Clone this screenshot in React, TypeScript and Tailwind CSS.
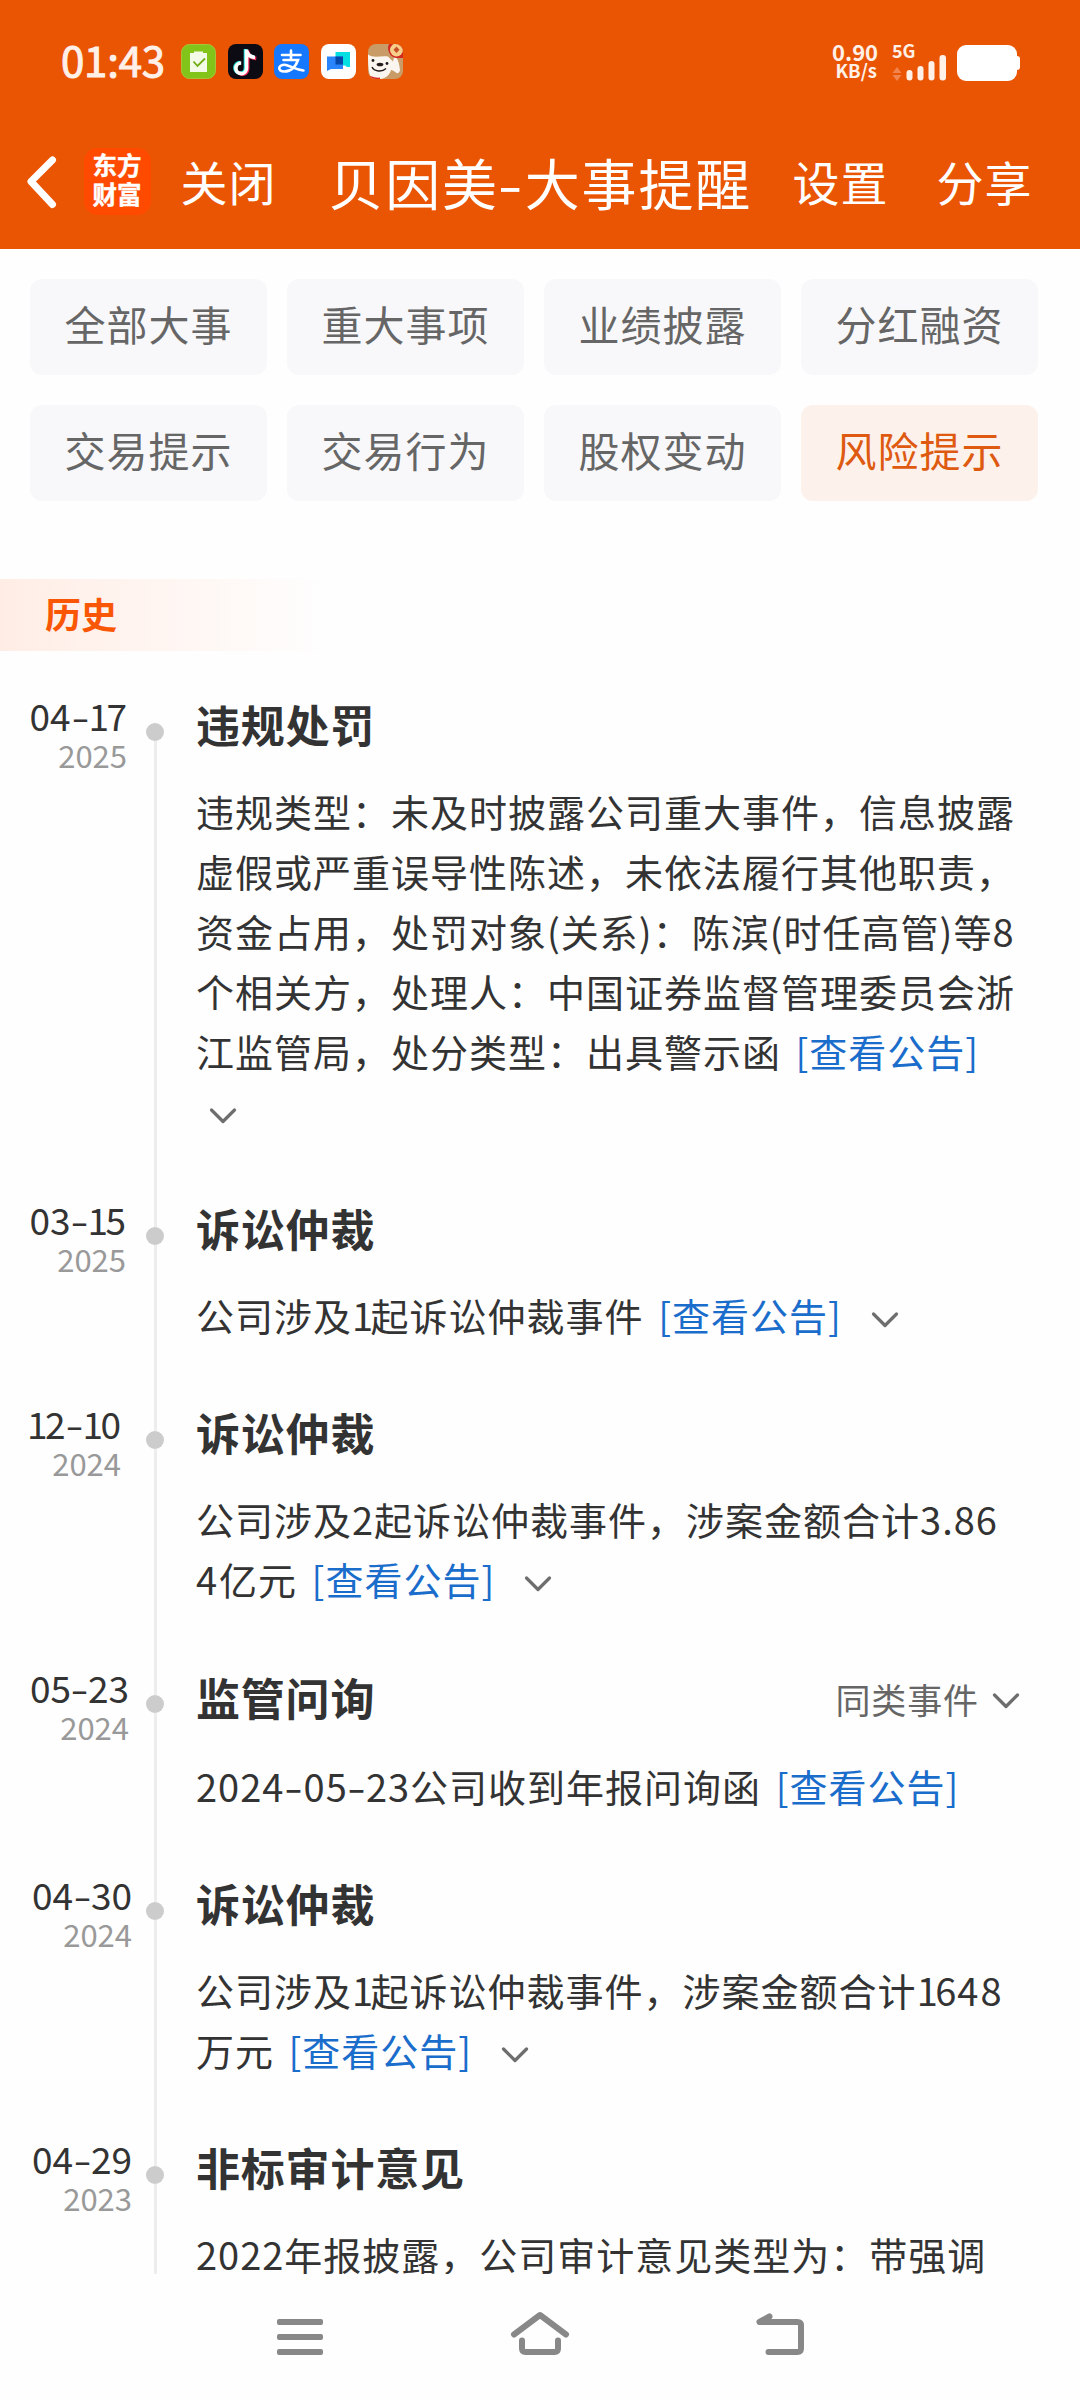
import React from "react";

type Line = { text: string; link?: boolean; chevron?: boolean };
type Item = {
  date: string;
  year: string;
  width: number;
  title: string;
  similar?: boolean;
  lines: Line[];
};

const items: Item[] = [
  {
    date: "04-17",
    year: "2025",
    width: 97,
    title: "违规处罚",
    lines: [
      { text: "违规类型：未及时披露公司重大事件，信息披露" },
      { text: "虚假或严重误导性陈述，未依法履行其他职责，" },
      { text: "资金占用，处罚对象(关系)：陈滨(时任高管)等8" },
      { text: "个相关方，处理人：中国证券监督管理委员会浙" },
      { text: "江监管局，处分类型：出具警示函", link: true },
      { text: "", chevron: true },
    ],
  },
  {
    date: "03-15",
    year: "2025",
    width: 96,
    title: "诉讼仲裁",
    lines: [{ text: "公司涉及1起诉讼仲裁事件", link: true, chevron: true }],
  },
  {
    date: "12-10",
    year: "2024",
    width: 91,
    title: "诉讼仲裁",
    lines: [
      { text: "公司涉及2起诉讼仲裁事件，涉案金额合计3.86" },
      { text: "4亿元", link: true, chevron: true },
    ],
  },
  {
    date: "05-23",
    year: "2024",
    width: 99,
    title: "监管问询",
    similar: true,
    lines: [{ text: "2024-05-23公司收到年报问询函", link: true }],
  },
  {
    date: "04-30",
    year: "2024",
    width: 102,
    title: "诉讼仲裁",
    lines: [
      { text: "公司涉及1起诉讼仲裁事件，涉案金额合计1648" },
      { text: "万元", link: true, chevron: true },
    ],
  },
  {
    date: "04-29",
    year: "2023",
    width: 102,
    title: "非标审计意见",
    lines: [{ text: "2022年报披露，公司审计意见类型为：带强调" }],
  },
];

const tabs = ["全部大事", "重大事项", "业绩披露", "分红融资", "交易提示", "交易行为", "股权变动", "风险提示"];

/* Proportional figures: a narrow 1, a slightly wide 4 and a broad hyphen. */
function Figures({ children }: { children: string }) {
  return (
    <span>
      {children.split(/([14-])/).map((part, i) => {
        if (part === "1") return <span key={i} className="tracking-[-2.5px]">1</span>;
        if (part === "4") return <span key={i} className="mr-[1px]">4</span>;
        if (part === "-") return <span key={i} className="ml-[2px] mr-[2px] inline-block scale-x-140">-</span>;
        return part;
      })}
    </span>
  );
}

function Chevron({ className }: { className: string }) {
  return (
    <svg className={className} width="28" height="18" viewBox="0 0 28 18" fill="none" stroke="#6e6e6e" strokeWidth="3.2" strokeLinecap="round" strokeLinejoin="round">
      <path d="M2.500 3 14 14.500 25.500 3" />
    </svg>
  );
}

function StatusBar() {
  return (
    <div className="flex h-[124px] items-start pl-[61px] pr-[60px] pt-11 text-[#fff0e8]">
      <div className="-mt-[3px] w-[120px] text-[42px] leading-[36px] tracking-[-0.2px] [-webkit-text-stroke:1px_#fff0e8]">01:43</div>
      <div className="flex gap-[11.7px]">
        <svg width="35" height="35" viewBox="0 0 35 35">
          <rect x="0.500" y="0.500" width="34" height="34" rx="8" fill="#83c41b" stroke="#a5c63a" />
          <path d="M9 9h4V7.500h9V9h4v19H9z" fill="#f3fae6" />
          <path d="m12.500 17.500 4 4.500 7.500-7.500" fill="none" stroke="#6fae12" strokeWidth="1.800" />
        </svg>
        <svg width="35" height="35" viewBox="0 0 35 35">
          <rect width="35" height="35" rx="8" fill="#0c0b14" />
          <g fill="none" strokeWidth="3.600">
            <path d="M17.500 5v19a5.300 5.300 0 1 1-5.300-5.500M17.500 6c1 4.500 4 6.500 8.500 7" stroke="#20e4e0" />
            <path d="M19.600 6.500V25.500a5.300 5.300 0 0 1-9.500 2.500M19.600 7.500c1 4.500 4 6.500 8.700 7" stroke="#f5295a" />
            <path d="M18.500 5.500v19a5.300 5.300 0 1 1-5.300-5.500M18.500 6.500c1 4.500 4 6.500 8.500 7" stroke="#fff" />
          </g>
        </svg>
        <svg width="35" height="35" viewBox="0 0 35 35">
          <rect width="35" height="35" rx="8" fill="#1677ff" />
          <path d="M8 11h18.500M17 6.500V16M9.500 16h14.500C22 22.500 17 27.500 10.500 27.500c-4 0-6-2-5-4.500 1-2 4.500-3 8-1.500 5 1.500 9.500 4.500 16 5" fill="none" stroke="#fff" strokeWidth="2.600" strokeLinecap="round" />
        </svg>
        <svg width="35" height="35" viewBox="0 0 35 35">
          <rect width="35" height="35" rx="8" fill="#fff" />
          <path d="M14.500 8H29v15h-3l-2-1.500h-9.500z" fill="#06dfe2" />
          <path d="M6 12.500h16V25H10l-4 2z" fill="#2a84fb" />
          <path d="M14.500 12.500H22V20.500h-7.500z" fill="#0647a8" />
        </svg>
        <svg width="35" height="35" viewBox="0 0 35 35">
          <defs>
            <clipPath id="mascot">
              <rect width="35" height="35" rx="8" />
            </clipPath>
          </defs>
          <g clipPath="url(#mascot)">
            <rect width="35" height="35" fill="#c99b66" />
            <path d="M0 10.500c5 4 13 1 20 2l5 5 1-4c3-1 5 4 6 12.500-1 4-3 4-6 1l-3-1c-2 8-10 10.500-18 8.500-4-1-5-10-5-24z" fill="#faf6ef" />
            <path d="M20 3c0 6 3 10 8 11l7 0V0H21z" fill="#d22a22" />
            <circle cx="28.500" cy="6" r="6.500" fill="#f7cf8b" />
            <path d="m28.500 2.500 3 3.200-3 3.200-3-3.200z" fill="#c7502a" />
            <ellipse cx="12" cy="20.500" rx="3.400" ry="1.800" fill="#221a18" />
            <circle cx="5" cy="16.500" r="1.400" fill="#221a18" />
            <circle cx="19" cy="19.500" r="1.400" fill="#221a18" />
            <path d="M4 23c2 4.500 10 5.500 14 1.500" fill="none" stroke="#221a18" strokeWidth="1.400" />
            <path d="M2 33c4 1.500 7 2 10 1.500" fill="none" stroke="#d22a22" strokeWidth="2" />
          </g>
        </svg>
      </div>
      <div className="ml-auto flex">
        <div className="-mt-[1px] w-[45px] text-right font-bold">
          <div className="text-[22px] leading-[17px]">0.90</div>
          <div className="mt-[2px] text-[18.5px] leading-[17px]">KB/s</div>
        </div>
        <div className="ml-[15px] w-[57px]">
          <div className="-mt-[1px] text-[18px] font-bold leading-[15px]">5G</div>
          <svg className="-mt-[3px] block" width="56" height="26" viewBox="0 0 56 26">
            <path d="M5 12l4.500 6h-9zM5 26l4.500-6h-9z" fill="#f28450" />
            <g fill="#fff0e8">
              <rect x="14.500" y="15" width="6" height="10.500" rx="3" />
              <rect x="25.500" y="11" width="6" height="14.500" rx="3" />
              <rect x="36.500" y="6" width="6" height="19.500" rx="3" />
              <rect x="47.500" y="0" width="6.500" height="25.500" rx="3" />
            </g>
          </svg>
        </div>
        <div className="ml-2 flex items-center">
          <div className="h-9 w-[60px] rounded-[9px] bg-white" />
          <div className="h-[14px] w-[3px] rounded-r-[3px] bg-white" />
        </div>
      </div>
    </div>
  );
}

function NavBar() {
  return (
    <div className="flex h-[118px] items-center pb-[4px] text-white">
      <svg className="ml-6 shrink-0" width="36" height="56" viewBox="0 0 36 56" fill="none" stroke="#fff" strokeWidth="7" strokeLinecap="round" strokeLinejoin="round">
        <path d="M28.500 7 7 28.500 28.500 51.500" />
      </svg>
      <div className="ml-[23.5px] flex h-[67px] w-[67px] shrink-0 flex-col items-center justify-center rounded-[14px] bg-[#ff4a00] pb-[5px] text-[24.5px] font-bold leading-[29px] [-webkit-text-stroke:0.4px_#fff]">
        <span>东方</span>
        <span>财富</span>
      </div>
      <div className="ml-[30px] w-[94px] shrink-0 whitespace-nowrap text-[47px] leading-[60px] tracking-[1px]">关闭</div>
      <div className="ml-[54px] w-[421px] shrink-0 whitespace-nowrap text-[55px] leading-[70px] tracking-[1.8px]">
        贝因美<span className="ml-[2.5px] mr-[2.5px] inline-block scale-x-130">-</span>大事提醒
      </div>
      <div className="ml-[43px] w-[98px] shrink-0 whitespace-nowrap text-[47px] leading-[60px] tracking-[1px]">设置</div>
      <div className="ml-[46px] shrink-0 whitespace-nowrap text-[47px] leading-[60px] tracking-[1px]">分享</div>
    </div>
  );
}

function Row({ line }: { line: Line }) {
  return (
    <div className="flex h-[60px] items-center whitespace-nowrap pb-[4px]">
      {line.text && <Figures>{line.text}</Figures>}
      {line.link && <span className="ml-[14.5px] text-[#1a6dcb]">[查看公告]</span>}
      {line.chevron && <Chevron className={line.link ? "ml-[29px] mt-[11px]" : "ml-[13px] mt-[11px]"} />}
    </div>
  );
}

function TimelineItem({ item, first }: { item: Item; first: boolean }) {
  return (
    <div className="flex">
      <div className="w-[146px] shrink-0 pl-[30px]">
        <div className="flex flex-col items-end whitespace-nowrap" style={{ width: item.width }}>
          <div className="text-[37px] leading-[41px] text-[#333]">
            <Figures>{item.date}</Figures>
          </div>
          <div className="text-[31px] leading-[38px] text-[#999]">{item.year}</div>
        </div>
      </div>
      <div className="flex w-[18px] shrink-0 flex-col items-center">
        <div className={first ? "h-7 w-[3px]" : "h-7 w-[3px] bg-[#ededed]"} />
        <div className="h-[18px] w-[18px] shrink-0 rounded-full bg-[#ccc]" />
        <div className="w-[3px] grow bg-[#ededed]" />
      </div>
      <div className="ml-8 w-[824px] pb-[57px]">
        <div className="flex h-[60px] items-center justify-between">
          <h2 className={item.similar ? "text-[44px] font-bold leading-[60px] tracking-[0.8px] text-[#333]" : "pb-[2px] text-[44px] font-bold leading-[58px] tracking-[0.8px] text-[#333]"}>{item.title}</h2>
          {item.similar && (
            <div className="flex items-center pt-[4px] text-[35px] leading-[50px] tracking-[0.9px] text-[#666]">
              <span>同类事件</span>
              <Chevron className="ml-[13px] mt-[4px]" />
            </div>
          )}
        </div>
        <div className={item.similar ? "mt-[30px] text-[38px] tracking-[1px] text-[#333]" : "mt-[27px] text-[38px] tracking-[1px] text-[#333]"}>
          {item.lines.map((l, i) => (
            <Row key={i} line={l} />
          ))}
        </div>
      </div>
    </div>
  );
}

function SystemNav() {
  return (
    <div className="flex h-[126px] items-start justify-between pl-[277px] pr-[275px] pt-[36px]">
      <svg width="46" height="48" viewBox="0 0 46 48" fill="#888">
        <rect y="9" width="46" height="6" rx="2" />
        <rect y="24" width="46" height="6" rx="2" />
        <rect y="39" width="46" height="6" rx="2" />
      </svg>
      <svg width="62" height="48" viewBox="0 0 62 48" fill="none" stroke="#888" strokeWidth="6" strokeLinecap="round" strokeLinejoin="round">
        <path d="M6 24.500 32 5l26 19.500" />
        <path d="M14 30.500V38.500q0 3.500 3.500 3.500h29q3.500 0 3.500-3.500v-8" />
      </svg>
      <svg width="50" height="48" viewBox="0 0 50 48" fill="none" stroke="#888" strokeWidth="6" strokeLinecap="round" strokeLinejoin="round">
        <path d="M14.500 6.500 4.500 12h38q3.500 0 3.500 3.500V38.500q0 3.500-3.500 3.500H13.500" />
      </svg>
    </div>
  );
}

export default function App() {
  return (
    <div className="flex h-[2400px] w-[1080px] flex-col overflow-hidden bg-[#fefefe] font-['Noto_Sans_CJK_SC',sans-serif]">
      <header className="h-[249px] shrink-0 bg-[#ea5504]">
        <StatusBar />
        <NavBar />
      </header>
      <nav className="mx-[30px] mt-[30px] grid w-[1008px] shrink-0 grid-cols-4 gap-x-5 gap-y-[30px]">
        {tabs.map((t, i) => (
          <div
            key={t}
            className={
              i === 7
                ? "flex h-24 items-center justify-center rounded-xl bg-[#fdf1eb] pb-[8px] text-[41px] leading-[60px] tracking-[1px] text-[#de5a10]"
                : "flex h-24 items-center justify-center rounded-xl bg-[#f8f8fa] pb-[8px] text-[41px] leading-[60px] tracking-[1px] text-[#666]"
            }
          >
            {t}
          </div>
        ))}
      </nav>
      <div className="mt-[78px] flex h-[72px] w-[330px] shrink-0 items-center bg-linear-to-r from-[#ffede5] to-[#fefefe] pb-[5px] pl-[45px] text-[36px] font-bold leading-[50px] text-[#f95706]">
        历史
      </div>
      <main className="h-[1623px] shrink-0 overflow-hidden pt-[44px]">
        {items.map((it, i) => (
          <TimelineItem key={it.date} item={it} first={i === 0} />
        ))}
      </main>
      <SystemNav />
    </div>
  );
}
